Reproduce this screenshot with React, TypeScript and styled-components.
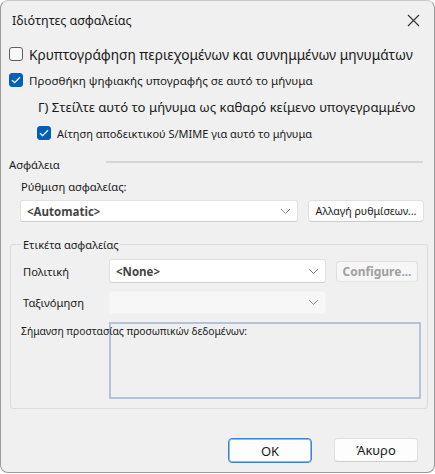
import React from "react";
import styled, { createGlobalStyle } from "styled-components";

const GlobalStyle = createGlobalStyle`
  html, body {
    margin: 0;
    padding: 0;
    background: #ffffff;
  }
  body {
    font-family: "Noto Sans", "Liberation Sans", sans-serif;
    color: #1a1a1a;
  }
`;

const Window = styled.div`
  box-sizing: border-box;
  width: 435px;
  height: 473px;
  background: #f0f0f0;
  border: 1px solid #9a9a9a;
  border-top-color: #c8c8c8;
  border-radius: 8px;
  display: flex;
  flex-direction: column;
  overflow: hidden;
`;

const TitleBar = styled.div`
  display: flex;
  align-items: center;
  justify-content: space-between;
  height: 38px;
  padding: 0 14px 0 11px;
  font-size: 12.5px;
`;

const CloseButton = styled.button`
  background: transparent;
  border: none;
  padding: 0;
  width: 14px;
  height: 14px;
  display: flex;
  align-items: center;
  justify-content: center;
  cursor: pointer;
`;

const Body = styled.div`
  flex: 1;
  display: flex;
  flex-direction: column;
  padding: 7px 8px 0 8px;
`;

const CheckRow = styled.label<{ $indent?: number; $size: number; $top: number }>`
  display: flex;
  align-items: center;
  gap: 6px;
  margin-left: ${({ $indent }) => $indent || 0}px;
  margin-top: ${({ $top }) => $top}px;
  font-size: ${({ $size }) => $size}px;
  white-space: nowrap;
  height: 16px;
`;

const Box = styled.span<{ $checked?: boolean }>`
  box-sizing: border-box;
  width: 14px;
  height: 14px;
  flex: none;
  border-radius: 3px;
  border: 1px solid ${({ $checked }) => ($checked ? "#005fb8" : "#616161")};
  background: ${({ $checked }) => ($checked ? "#005fb8" : "#f7f7f7")};
  display: flex;
  align-items: center;
  justify-content: center;
`;

const PlainLine = styled.div`
  margin: 11px 0 0 29px;
  font-size: 13.1px;
  white-space: nowrap;
  height: 16px;
  display: flex;
  align-items: center;
`;

const SectionHead = styled.div`
  display: flex;
  align-items: center;
  gap: 46px;
  margin-top: 15px;
  height: 16px;
  font-size: 11.3px;
  padding-right: 3px;
  &::after {
    content: "";
    flex: 1;
    height: 2px;
    background: #d6d6d6;
    margin-top: -5px;
  }
`;

const FieldLabel = styled.div`
  margin: 7px 0 0 12px;
  height: 15px;
  line-height: 15px;
  font-size: 11.2px;
`;

const Row = styled.div<{ $top: number; $indent?: number }>`
  display: flex;
  align-items: center;
  margin-top: ${({ $top }) => $top}px;
  margin-left: ${({ $indent }) => $indent || 0}px;
`;

const Combo = styled.div<{ $width: number; $height?: number; $disabled?: boolean }>`
  box-sizing: border-box;
  width: ${({ $width }) => $width}px;
  height: ${({ $height }) => $height || 22}px;
  border: 1px solid ${({ $disabled }) => ($disabled ? "#f3f3f3" : "#e2e2e2")};
  border-bottom-color: ${({ $disabled }) => ($disabled ? "#f3f3f3" : "#cfcfcf")};
  border-radius: 3px;
  background: ${({ $disabled }) => ($disabled ? "#f7f7f7" : "#ffffff")};
  display: flex;
  align-items: center;
  justify-content: space-between;
  padding: 0 6px 0 6px;
  font-family: "Open Sans", "Noto Sans", sans-serif;
  font-weight: 700;
  font-size: 11.5px;
  color: #444;
`;

const Button = styled.button<{ $width: number; $disabled?: boolean; $primary?: boolean }>`
  box-sizing: border-box;
  width: ${({ $width }) => $width}px;
  height: 22px;
  border: 1px solid ${({ $primary }) => ($primary ? "#3a84d0" : "#e0e0e0")};
  box-shadow: ${({ $primary }) => ($primary ? "inset 0 0 0 1px #8fb8e4" : "none")};
  border-bottom-color: ${({ $primary, $disabled }) =>
    $primary ? "#3a84d0" : $disabled ? "#e6e6e6" : "#cccccc"};
  border-radius: 4px;
  background: ${({ $disabled }) => ($disabled ? "#f6f6f6" : "#fdfdfd")};
  color: ${({ $disabled }) => ($disabled ? "#a0a0a0" : "#1a1a1a")};
  font-family: "Noto Sans", sans-serif;
  font-size: 12px;
  font-weight: ${({ $disabled }) => ($disabled ? 700 : 400)};
  white-space: nowrap;
  padding: 0;
  display: flex;
  align-items: center;
  justify-content: center;
`;

const GroupBox = styled.fieldset`
  box-sizing: border-box;
  margin: 15px 0 0 1px;
  width: 418px;
  border: 1px solid #dcdcdc;
  border-radius: 3px;
  padding: 0 0 9px 12px;
  display: flex;
  flex-direction: column;
  legend {
    font-size: 11px;
    line-height: 15px;
    padding: 0 1px 0 2px;
    margin-left: -2px;
  }
`;

const GroupLabel = styled.div`
  width: 86px;
  font-size: 11.2px;
`;

const NoteRow = styled.div`
  display: flex;
  margin-top: 8px;
  font-size: 10.3px;
  position: relative;
`;

const NoteLabel = styled.div`
  position: absolute;
  left: -2px;
  top: 2px;
  white-space: nowrap;
  z-index: 1;
`;

const NoteBox = styled.div`
  box-sizing: border-box;
  margin-left: 86px;
  width: 312px;
  height: 77px;
  border: 2px solid #b4c3d8;
  background: #f0f0f0;
`;

const Footer = styled.div`
  display: flex;
  justify-content: flex-end;
  gap: 22px;
  padding: 0 16px 9px 0;
  margin-top: auto;
`;

const Chevron = () => (
  <svg width="11" height="7" viewBox="0 0 11 7">
    <path d="M1 1l4.5 4.5L10 1" fill="none" stroke="#8a8a8a" strokeWidth="1" />
  </svg>
);

const Check = () => (
  <svg width="10" height="8" viewBox="0 0 10 8">
    <path d="M1 4.2l2.6 2.4L9 1.2" fill="none" stroke="#fff" strokeWidth="1.3" />
  </svg>
);

export default function App() {
  return (
    <>
      <GlobalStyle />
      <Window>
        <TitleBar>
          <span>Ιδιότητες ασφαλείας</span>
          <CloseButton aria-label="close">
            <svg width="13" height="13" viewBox="0 0 13 13">
              <path d="M1 1l11 11M12 1L1 12" stroke="#333" strokeWidth="1.1" />
            </svg>
          </CloseButton>
        </TitleBar>
        <Body>
          <CheckRow $size={13.7} $top={0}>
            <Box />
            <span>Κρυπτογράφηση περιεχομένων και συνημμένων μηνυμάτων</span>
          </CheckRow>
          <CheckRow $size={11.6} $top={10}>
            <Box $checked>
              <Check />
            </Box>
            <span>Προσθήκη ψηφιακής υπογραφής σε αυτό το μήνυμα</span>
          </CheckRow>
          <PlainLine>Γ) Στείλτε αυτό το μήνυμα ως καθαρό κείμενο υπογεγραμμένο</PlainLine>
          <CheckRow $size={11} $indent={28} $top={10}>
            <Box $checked>
              <Check />
            </Box>
            <span>Αίτηση αποδεικτικού S/MIME για αυτό το μήνυμα</span>
          </CheckRow>
          <SectionHead>Ασφάλεια</SectionHead>
          <FieldLabel>Ρύθμιση ασφαλείας:</FieldLabel>
          <Row $top={6} $indent={11}>
            <Combo $width={278}>
              <span>&lt;Automatic&gt;</span>
              <Chevron />
            </Combo>
            <Button $width={116} style={{ marginLeft: 10, fontSize: 10.6 }}>
              Αλλαγή ρυθμίσεων...
            </Button>
          </Row>
          <GroupBox>
            <legend>Ετικέτα ασφαλείας</legend>
            <Row $top={7}>
              <GroupLabel>Πολιτική</GroupLabel>
              <Combo $width={217} $height={24}>
                <span>&lt;None&gt;</span>
                <Chevron />
              </Combo>
              <Button $width={82} $disabled style={{ marginLeft: 10, height: 21 }}>
                Configure...
              </Button>
            </Row>
            <Row $top={8}>
              <GroupLabel>Ταξινόμηση</GroupLabel>
              <Combo $width={217} $height={23} $disabled>
                <span />
                <Chevron />
              </Combo>
            </Row>
            <NoteRow>
              <NoteLabel>Σήμανση προστασίας προσωπικών δεδομένων:</NoteLabel>
              <NoteBox />
            </NoteRow>
          </GroupBox>
        </Body>
        <Footer>
          <Button $width={84} $primary style={{ height: 25, fontSize: 13 }}>
            OK
          </Button>
          <Button $width={84} style={{ height: 24, fontSize: 13 }}>
            Άκυρο
          </Button>
        </Footer>
      </Window>
    </>
  );
}
